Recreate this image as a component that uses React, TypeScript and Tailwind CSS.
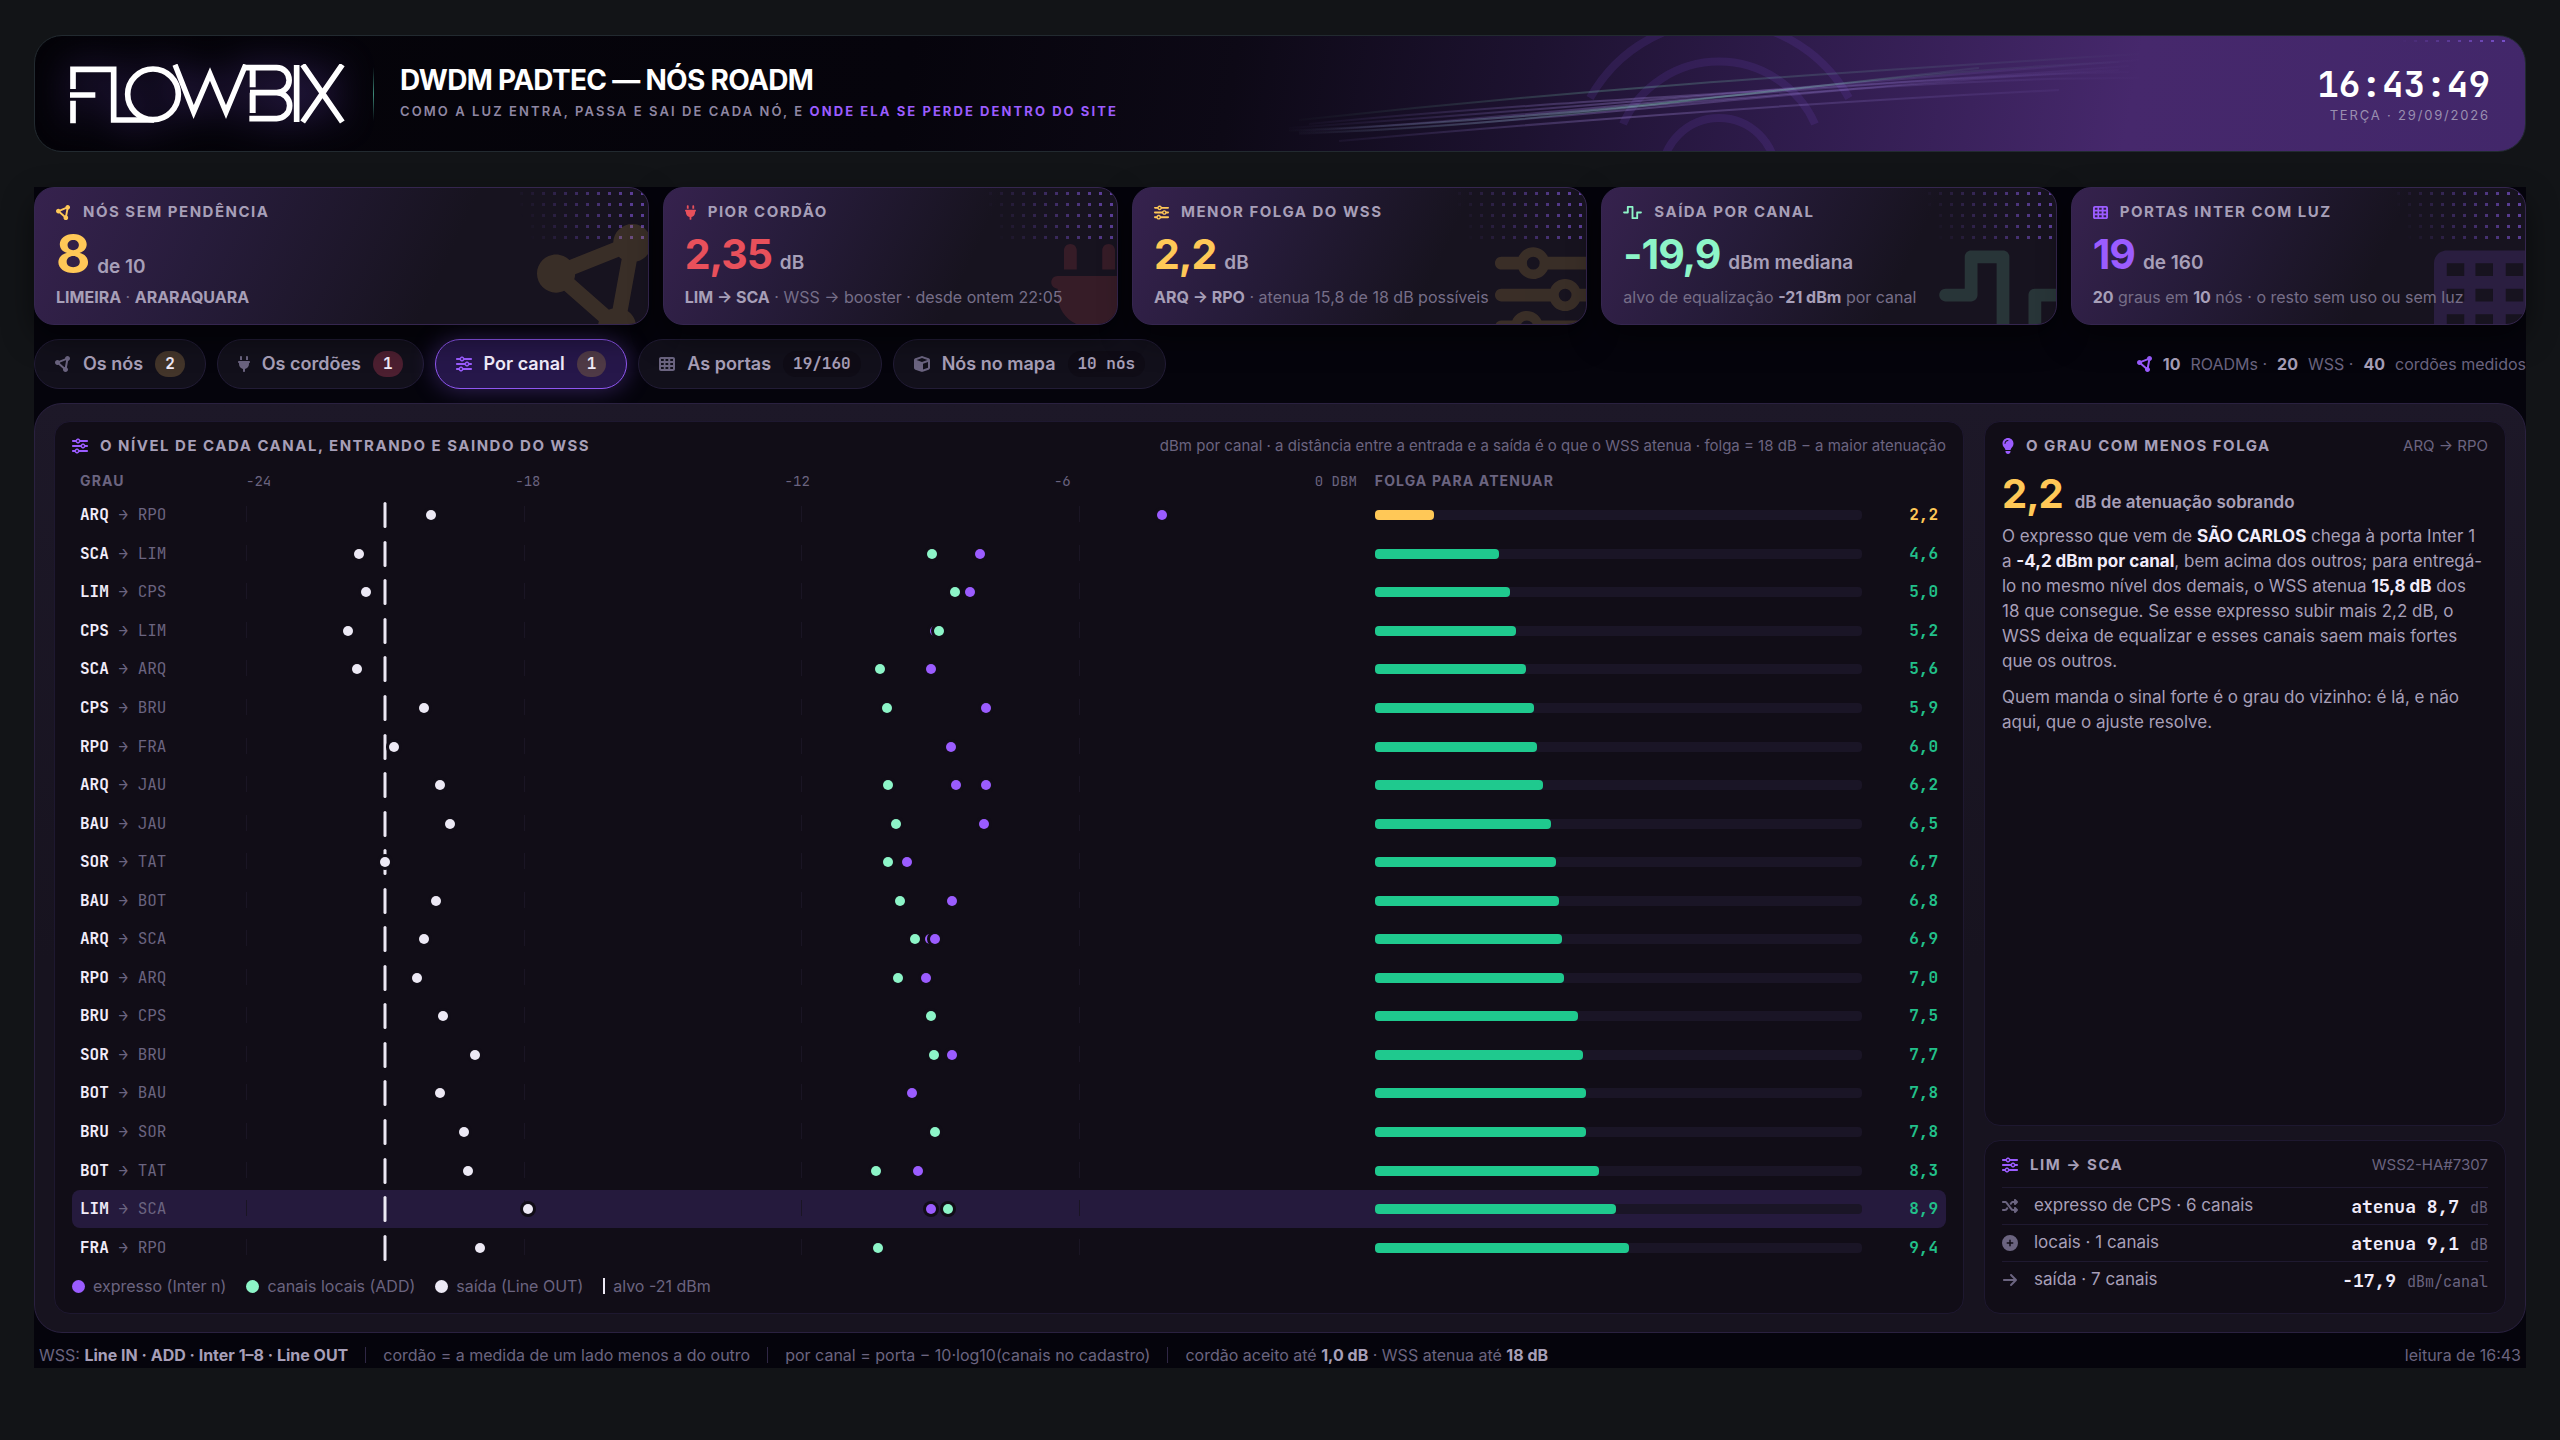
import type { ReactNode } from "react";
import type { IconType } from "react-icons";
import {
  FaArrowRight,
  FaCircleNodes,
  FaCirclePlus,
  FaCube,
  FaLightbulb,
  FaPlug,
  FaShuffle,
  FaSliders,
  FaTableCells,
  FaWaveSquare,
} from "react-icons/fa6";

const MONO = "font-['JetBrains_Mono','DejaVu_Sans_Mono',monospace]";

type Degree = {
  from: string;
  to: string;
  out: number;
  express: number[];
  add: number[];
  slack: number;
};

// levels in dBm per channel, slack in dB
const degrees: Degree[] = [
  { from: "ARQ", to: "RPO", out: -20, express: [-4.2], add: [], slack: 2.2 },
  { from: "SCA", to: "LIM", out: -21.55, express: [-8.14], add: [-9.17], slack: 4.6 },
  { from: "LIM", to: "CPS", out: -21.4, express: [-8.36], add: [-8.68], slack: 5.0 },
  { from: "CPS", to: "LIM", out: -21.8, express: [-9.11], add: [-9.03], slack: 5.2 },
  { from: "SCA", to: "ARQ", out: -21.6, express: [-9.2], add: [-10.3], slack: 5.6 },
  { from: "CPS", to: "BRU", out: -20.15, express: [-8.01], add: [-10.15], slack: 5.9 },
  { from: "RPO", to: "FRA", out: -20.8, express: [-8.77], add: [], slack: 6.0 },
  { from: "ARQ", to: "JAU", out: -19.8, express: [-8.66, -8.01], add: [-10.12], slack: 6.2 },
  { from: "BAU", to: "JAU", out: -19.6, express: [-8.05], add: [-9.95], slack: 6.5 },
  { from: "SOR", to: "TAT", out: -21, express: [-9.72], add: [-10.12], slack: 6.7 },
  { from: "BAU", to: "BOT", out: -19.9, express: [-8.74], add: [-9.86], slack: 6.8 },
  { from: "ARQ", to: "SCA", out: -20.15, express: [-9.23, -9.12], add: [-9.54], slack: 6.9 },
  { from: "RPO", to: "ARQ", out: -20.3, express: [-9.31], add: [-9.92], slack: 7.0 },
  { from: "BRU", to: "CPS", out: -19.75, express: [], add: [-9.19], slack: 7.5 },
  { from: "SOR", to: "BRU", out: -19.05, express: [-8.74], add: [-9.14], slack: 7.7 },
  { from: "BOT", to: "BAU", out: -19.8, express: [-9.6], add: [], slack: 7.8 },
  { from: "BRU", to: "SOR", out: -19.3, express: [], add: [-9.12], slack: 7.8 },
  { from: "BOT", to: "TAT", out: -19.2, express: [-9.48], add: [-10.38], slack: 8.3 },
  { from: "LIM", to: "SCA", out: -17.9, express: [-9.19], add: [-8.83], slack: 8.9 },
  { from: "FRA", to: "RPO", out: -18.95, express: [], add: [-10.35], slack: 9.4 },
];

const toPercent = (dbm: number) => `${((dbm + 24) / 24) * 100}%`;

function Logo() {
  return (
    <svg
      viewBox="148 101 828 178"
      className="h-[60px] w-[276px] drop-shadow-[0_0_18px_rgba(139,92,246,0.45)]"
      fill="none"
      stroke="#fff"
      strokeWidth="17"
      strokeMiterlimit="10"
      role="img"
      aria-label="Flowbix"
    >
      <path d="M157 175V116H279V268H400" />
      <path d="M148 193H224M157 210V278" />
      <circle cx="397" cy="191" r="76" />
      <path d="M463 102L519 244L568 130L616 244L675 102" strokeWidth="16" />
      <path d="M669 111H768A37 37 0 0 1 768 186H688M768 186A39 39 0 0 1 768 264H686" />
      <path d="M696 111V170M696 186V247" strokeWidth="18" />
      <path d="M828 103V274M846 102L965 274M965 102L846 274" />
    </svg>
  );
}

function HeaderArt() {
  return (
    <svg
      viewBox="0 0 1246 117"
      className="pointer-events-none absolute right-0 top-0 h-[117px] w-[1246px]"
      fill="none"
      aria-hidden="true"
    >
      <defs>
        <linearGradient id="beam" x1="0" x2="870" y1="0" y2="0" gradientUnits="userSpaceOnUse">
          <stop offset="0" stopColor="#a78bfa" stopOpacity="0" />
          <stop offset="0.4" stopColor="#a98fe0" stopOpacity="0.32" />
          <stop offset="1" stopColor="#a78bfa" stopOpacity="0" />
        </linearGradient>
        <linearGradient id="beamMint" x1="0" x2="870" y1="0" y2="0" gradientUnits="userSpaceOnUse">
          <stop offset="0" stopColor="#8df5c8" stopOpacity="0" />
          <stop offset="0.4" stopColor="#8df5c8" stopOpacity="0.22" />
          <stop offset="1" stopColor="#8df5c8" stopOpacity="0" />
        </linearGradient>
      </defs>
      <g stroke="#7c4ddb" strokeOpacity="0.14" strokeWidth="8">
        <path d="M311 62A153 153 0 0 1 385 -4M495 -4A153 153 0 0 1 570 62" />
        <path d="M344 88A105 105 0 0 1 536 88" />
        <circle cx="440" cy="139" r="57" />
      </g>
      <g stroke="url(#beam)" strokeWidth="2">
        <path d="M10 92C300 72 520 50 860 24" />
        <path d="M20 96C300 78 560 42 850 36" />
        <path d="M20 98C290 86 560 48 840 34" />
        <path d="M30 88C300 62 520 56 850 30" />
        <path d="M60 105C320 82 540 66 780 54" />
        <path d="M10 94C270 86 590 40 860 42" />
      </g>
      <g stroke="url(#beamMint)" strokeWidth="2">
        <path d="M20 84C300 54 500 40 860 18" />
        <path d="M20 97C300 90 520 40 840 26" />
        <path d="M10 95C260 84 430 62 700 32" />
      </g>
    </svg>
  );
}

function Dots() {
  return (
    <div
      aria-hidden="true"
      className="pointer-events-none absolute right-0 top-0 h-14 w-[132px] bg-[radial-gradient(circle,#7a52cc_1.5px,transparent_2px)] bg-[length:11px_11px] opacity-80 [mask-image:linear-gradient(250deg,black,transparent_90%)]"
    />
  );
}

type KpiProps = {
  icon: IconType;
  iconClass?: string;
  markClass?: string;
  color: string;
  label: string;
  value: string;
  unit: string;
  big?: boolean;
  children: ReactNode;
};

function Kpi({
  icon: Icon,
  iconClass = "w-[15px]",
  markClass = "h-[102px] w-[102px]",
  color,
  label,
  value,
  unit,
  big,
  children,
}: KpiProps) {
  return (
    <article className="relative h-[138px] overflow-hidden rounded-[20px] border border-[#35264f] bg-[linear-gradient(115deg,#36224e_0%,#271c3b_28%,#17131f_66%)] px-[21px] pt-4 shadow-[0_12px_30px_rgba(0,0,0,0.5)]">
      <Dots />
      <Icon aria-hidden="true" className={`absolute bottom-[-22px] right-[-11px] opacity-15 ${markClass} ${color}`} />
      <div className="relative">
        <h2 className="flex items-center gap-3 text-[15px] leading-4 font-bold tracking-[0.1em] text-[#a79fb8]">
          <Icon className={`h-[15px] ${iconClass} ${color}`} aria-hidden="true" />
          {label}
        </h2>
        <p className="mt-[10px] flex h-[48px] items-baseline gap-2">
          <span className={`font-bold leading-[48px] tracking-tight ${big ? "text-[53px]" : "text-[41px]"} ${color}`}>
            {value}
          </span>
          <span className="text-[19px] font-semibold text-[#a79fb8]">{unit}</span>
        </p>
        <p className="mt-[7px] text-base leading-6 whitespace-nowrap text-[#766e88]">{children}</p>
      </div>
    </article>
  );
}

type TabProps = {
  icon: IconType;
  iconClass?: string;
  label: string;
  badge: string;
  badgeClass?: string;
  active?: boolean;
};

function Tab({
  icon: Icon,
  iconClass = "w-4",
  label,
  badge,
  badgeClass = "bg-[#0f0c16] text-[#a79fb8]",
  active,
}: TabProps) {
  return (
    <button
      type="button"
      role="tab"
      aria-selected={!!active}
      className={`flex h-[50px] items-center rounded-full border px-5 text-lg font-semibold ${
        active
          ? "border-[#8f56f0] bg-[#26174a] text-[#f1ecfa] shadow-[0_0_24px_rgba(139,92,246,0.35)]"
          : "border-[#221c36] bg-[#12101b] text-[#a79fb8]"
      }`}
    >
      <Icon
        className={`mr-3 h-4 ${iconClass} ${active ? "text-[#9b5cff]" : "text-[#6b6480]"}`}
        aria-hidden="true"
      />
      {label}
      <span className={`ml-3 rounded-full px-[10px] text-base leading-[26px] font-bold ${MONO} ${badgeClass}`}>
        {badge}
      </span>
    </button>
  );
}

function PanelTitle({
  icon: Icon,
  iconClass = "w-4",
  title,
  note,
}: {
  icon: IconType;
  iconClass?: string;
  title: string;
  note: string;
}) {
  return (
    <div className="flex h-6 items-center justify-between">
      <h3 className="flex items-center gap-3 text-[15px] font-bold tracking-[0.1em] text-[#a79fb8]">
        <Icon className={`h-4 text-[#9b5cff] ${iconClass}`} aria-hidden="true" />
        {title}
      </h3>
      <span className="text-[15px] text-[#6b6480]">{note}</span>
    </div>
  );
}

function Dot({ dbm, color }: { dbm: number; color: string }) {
  return (
    <span
      className={`absolute top-1/2 size-[10px] -translate-x-1/2 -translate-y-1/2 rounded-full ring-[3px] ring-[#110d17] ${color}`}
      style={{ left: toPercent(dbm) }}
    />
  );
}

const ROW = "grid grid-cols-[148px_2.28fr_1fr_58px] items-center gap-x-[18px] px-2";

function DegreeRow({ degree }: { degree: Degree }) {
  const selected = degree.from === "LIM" && degree.to === "SCA";
  const low = degree.slack < 3;
  return (
    <tr className={`${ROW} min-h-8 flex-1 rounded-lg text-base ${MONO} ${selected ? "bg-[#251a3d]" : ""}`}>
      <th scope="row" className="text-left font-normal text-[#6b6480]">
        <b className="font-bold text-[#f1ecfa]">{degree.from}</b> → {degree.to}
      </th>
      <td className="relative h-[26px]">
        {[-24, -18, -12, -6].map((dbm) => (
          <span key={dbm} className="absolute top-1 h-4 w-px bg-[#1a1524]" style={{ left: toPercent(dbm) }} />
        ))}
        <span
          className="absolute top-0 h-full w-[3px] -translate-x-1/2 rounded-full bg-[#ede9f5]"
          style={{ left: toPercent(-21) }}
        />
        {degree.express.map((dbm) => (
          <Dot key={dbm} dbm={dbm} color="bg-[#9b5cff]" />
        ))}
        {degree.add.map((dbm) => (
          <Dot key={dbm} dbm={dbm} color="bg-[#8df5c8]" />
        ))}
        <Dot dbm={degree.out} color="bg-[#ede9f5]" />
      </td>
      <td>
        <div className="h-[10px] rounded-[4px] bg-[#1a1526]">
          <div
            className={`h-full rounded-[4px] ${low ? "bg-[#ffc857]" : "bg-[#1fc98e]"}`}
            style={{ width: `${(degree.slack / 18) * 100}%` }}
          />
        </div>
      </td>
      <td className={`text-right font-bold ${low ? "text-[#ffc857]" : "text-[#22c08a]"}`}>
        {degree.slack.toFixed(1).replace(".", ",")}
      </td>
    </tr>
  );
}

function Legend({ color, children }: { color: string; children: ReactNode }) {
  return (
    <span className="flex items-center gap-2">
      <i className={`size-[13px] rounded-full ${color}`} />
      {children}
    </span>
  );
}

function WssRow({ icon: Icon, label, value, unit }: { icon: IconType; label: string; value: string; unit: string }) {
  return (
    <li className="flex h-[37px] items-center border-t border-[#1f1930] text-[17px] text-[#a79fb8]">
      <Icon className="mr-4 size-4 text-[#6b6480]" aria-hidden="true" />
      {label}
      <span className={`ml-auto text-[18px] font-bold text-[#f1ecfa] ${MONO}`}>
        {value} <small className="text-[15px] font-normal text-[#6b6480]">{unit}</small>
      </span>
    </li>
  );
}

const PANEL = "rounded-2xl border border-[#1e1830] bg-[#110d17]";
const strong = "font-bold text-[#a79fb8]";
const bright = "font-bold text-[#f1ecfa]";

export default function App() {
  return (
    <div className="flex min-h-screen flex-col bg-[#121417] px-[34px] pt-[35px] pb-[72px] font-['Inter','Open_Sans',sans-serif] text-[#a79fb8]">
      <header className="relative flex h-[117px] items-center overflow-hidden rounded-[28px] border border-[#222a30] bg-[linear-gradient(100deg,#040308_0%,#06040c_35%,#0d0916_48%,#1d1230_60%,#2e1b4b_70%,#46286c_84%,#42276a_100%)] px-[35px]">
        <HeaderArt />
        <div
          aria-hidden="true"
          className="absolute right-4 top-0 h-[6px] w-[110px] bg-[radial-gradient(circle,#7a52cc_1.5px,transparent_2px)] bg-[length:11px_11px] [mask-image:linear-gradient(270deg,black,transparent)]"
        />
        <Logo />
        <div className="mr-[26px] ml-[27px] h-[54px] w-px bg-[linear-gradient(transparent,#3f8a78,transparent)]" />
        <div className="pb-1">
          <h1 className="text-[28px] leading-9 font-bold tracking-tight text-white">DWDM PADTEC — NÓS ROADM</h1>
          <p className="mt-[3px] text-[13px] leading-5 font-semibold tracking-[0.16em] text-[#8f87a3]">
            COMO A LUZ ENTRA, PASSA E SAI DE CADA NÓ, E{" "}
            <b className="font-bold text-[#9b5cff]">ONDE ELA SE PERDE DENTRO DO SITE</b>
          </p>
        </div>
        <div className="relative ml-auto text-right">
          <time className={`block text-4xl leading-[42px] font-bold text-white ${MONO}`}>16:43:49</time>
          <p className="text-[13px] leading-5 tracking-[0.14em] text-[#9a8fb0]">TERÇA · 29/09/2026</p>
        </div>
      </header>

      <main className="mt-[35px] flex flex-1 flex-col bg-[#05040c]">
        <section className="grid grid-cols-[1.35fr_1fr_1fr_1fr_1fr] gap-[14px]">
          <Kpi
            icon={FaCircleNodes}
            markClass="h-[122px] w-[122px]"
            color="text-[#ffc857]"
            label="NÓS SEM PENDÊNCIA"
            value="8"
            unit="de 10"
            big
          >
            <b className={strong}>LIMEIRA</b> · <b className={strong}>ARARAQUARA</b>
          </Kpi>
          <Kpi
            icon={FaPlug}
            iconClass="w-[11px]"
            markClass="h-[102px] w-[77px]"
            color="text-[#e8505b]"
            label="PIOR CORDÃO"
            value="2,35"
            unit="dB"
          >
            <b className={strong}>LIM → SCA</b> · WSS → booster · desde ontem 22:05
          </Kpi>
          <Kpi icon={FaSliders} color="text-[#ffc857]" label="MENOR FOLGA DO WSS" value="2,2" unit="dB">
            <b className={strong}>ARQ → RPO</b> · atenua 15,8 de 18 dB possíveis
          </Kpi>
          <Kpi
            icon={FaWaveSquare}
            iconClass="w-[19px]"
            markClass="h-[102px] w-[128px]"
            color="text-[#8df5c8]"
            label="SAÍDA POR CANAL"
            value="-19,9"
            unit="dBm mediana"
          >
            alvo de equalização <b className={strong}>-21 dBm</b> por canal
          </Kpi>
          <Kpi icon={FaTableCells} color="text-[#9b5cff]" label="PORTAS INTER COM LUZ" value="19" unit="de 160">
            <b className={strong}>20</b> graus em <b className={strong}>10</b> nós · o resto sem uso ou sem luz
          </Kpi>
        </section>

        <div className="mt-[14px] flex items-center justify-between">
          <nav role="tablist" className="flex gap-[11px]">
            <Tab icon={FaCircleNodes} label="Os nós" badge="2" badgeClass="bg-[#43352a] text-[#f1ecfa]" />
            <Tab
              icon={FaPlug}
              iconClass="w-3"
              label="Os cordões"
              badge="1"
              badgeClass="bg-[#4c1f30] text-[#f1ecfa]"
            />
            <Tab icon={FaSliders} label="Por canal" badge="1" badgeClass="bg-[#4f3a46] text-[#f1ecfa]" active />
            <Tab icon={FaTableCells} label="As portas" badge="19/160" />
            <Tab icon={FaCube} label="Nós no mapa" badge="10 nós" />
          </nav>
          <p className="flex items-center gap-[10px] text-base text-[#6b6480]">
            <FaCircleNodes className="size-4 text-[#9b5cff]" aria-hidden="true" />
            <b className={strong}>10</b> ROADMs · <b className={strong}>20</b> WSS · <b className={strong}>40</b> cordões
            medidos
          </p>
        </div>

        <section className="mt-[14px] grid flex-1 grid-cols-[1fr_522px] gap-5 rounded-[28px] border border-[#2a2140] bg-[linear-gradient(#1d1828,#17131f_60%)] px-[19px] pt-[17px] pb-[18px]">
          <div className={`${PANEL} flex flex-col px-[17px] pt-3 pb-[15px]`}>
            <PanelTitle
              icon={FaSliders}
              title="O NÍVEL DE CADA CANAL, ENTRANDO E SAINDO DO WSS"
              note="dBm por canal · a distância entre a entrada e a saída é o que o WSS atenua · folga = 18 dB − a maior atenuação"
            />
            <table className="mt-[11px] flex flex-1 flex-col gap-[3px]">
              <thead className="block">
                <tr className={`${ROW} h-6 text-sm tracking-[0.08em] text-[#6b6480]`}>
                  <th className="text-left font-bold">GRAU</th>
                  <th className={`flex justify-between font-normal tracking-normal ${MONO}`}>
                    <span>-24</span>
                    <span>-18</span>
                    <span>-12</span>
                    <span>-6</span>
                    <span>0 DBM</span>
                  </th>
                  <th className="text-left font-bold">FOLGA PARA ATENUAR</th>
                  <th />
                </tr>
              </thead>
              <tbody className="flex flex-1 flex-col">
                {degrees.map((degree) => (
                  <DegreeRow key={`${degree.from}-${degree.to}`} degree={degree} />
                ))}
              </tbody>
            </table>
            <div className="mt-[7px] flex h-6 items-center gap-5 text-base text-[#6b6480]">
              <Legend color="bg-[#9b5cff]">expresso (Inter n)</Legend>
              <Legend color="bg-[#8df5c8]">canais locais (ADD)</Legend>
              <Legend color="bg-[#ede9f5]">saída (Line OUT)</Legend>
              <span className="flex items-center gap-2">
                <i className="h-4 w-[2px] bg-[#ede9f5]" />
                alvo -21 dBm
              </span>
            </div>
          </div>

          <div className="flex flex-col gap-[14px]">
            <div className={`${PANEL} flex-1 px-[17px] pt-3`}>
              <PanelTitle icon={FaLightbulb} iconClass="w-3" title="O GRAU COM MENOS FOLGA" note="ARQ → RPO" />
              <p className="mt-[14px] flex items-baseline gap-3">
                <span className="text-[40px] leading-[44px] font-bold tracking-tight text-[#ffc857]">2,2</span>
                <span className="text-[17px] font-semibold">dB de atenuação sobrando</span>
              </p>
              <div className="mt-2 space-y-[11px] text-[17px] leading-[25px]">
                <p>
                  O expresso que vem de <b className={bright}>SÃO CARLOS</b> chega à porta Inter 1 a{" "}
                  <b className={bright}>-4,2 dBm por canal</b>, bem acima dos outros; para entregá-lo no mesmo nível dos
                  demais, o WSS atenua <b className={bright}>15,8 dB</b> dos 18 que consegue. Se esse expresso subir
                  mais 2,2 dB, o WSS deixa de equalizar e esses canais saem mais fortes que os outros.
                </p>
                <p>Quem manda o sinal forte é o grau do vizinho: é lá, e não aqui, que o ajuste resolve.</p>
              </div>
            </div>
            <div className={`${PANEL} h-[174px] px-[17px] pt-3`}>
              <PanelTitle icon={FaSliders} title="LIM → SCA" note="WSS2-HA#7307" />
              <ul className="mt-[10px]">
                <WssRow icon={FaShuffle} label="expresso de CPS · 6 canais" value="atenua 8,7" unit="dB" />
                <WssRow icon={FaCirclePlus} label="locais · 1 canais" value="atenua 9,1" unit="dB" />
                <WssRow icon={FaArrowRight} label="saída · 7 canais" value="-17,9" unit="dBm/canal" />
              </ul>
            </div>
          </div>
        </section>

        <footer className="flex h-[35px] items-center px-[5px] pt-2 text-base text-[#6b6480]">
          <span>
            WSS: <b className={strong}>Line IN · ADD · Inter 1–8 · Line OUT</b>
          </span>
          <i className="mx-[17px] h-4 w-px bg-[#2f2745]" />
          <span>cordão = a medida de um lado menos a do outro</span>
          <i className="mx-[17px] h-4 w-px bg-[#2f2745]" />
          <span>por canal = porta − 10·log10(canais no cadastro)</span>
          <i className="mx-[17px] h-4 w-px bg-[#2f2745]" />
          <span>
            cordão aceito até <b className={strong}>1,0 dB</b> · WSS atenua até <b className={strong}>18 dB</b>
          </span>
          <span className="ml-auto">leitura de 16:43</span>
        </footer>
      </main>
    </div>
  );
}
